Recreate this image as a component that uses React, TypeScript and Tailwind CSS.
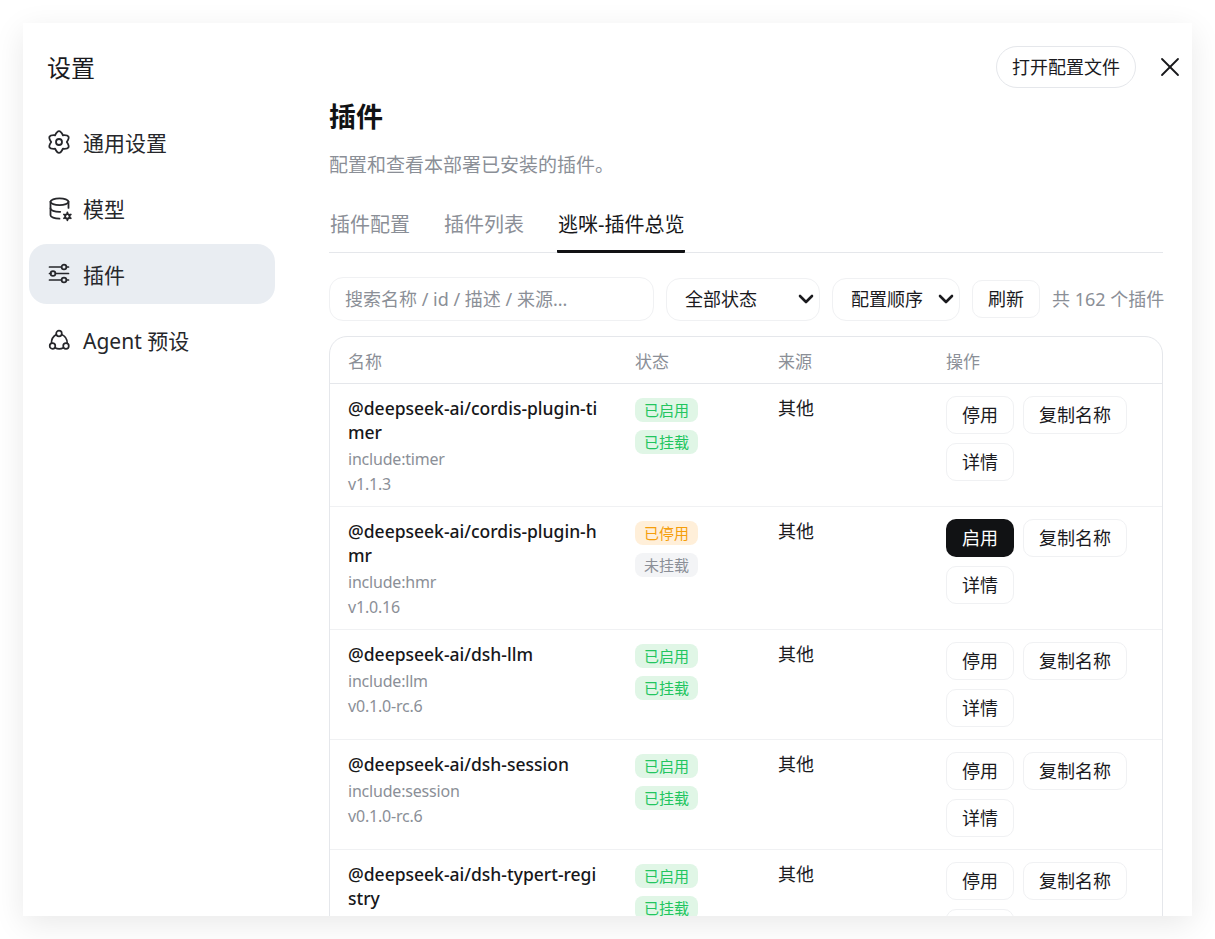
import { ChevronDown, X } from 'lucide-react';
import { TbDatabaseCog } from 'react-icons/tb';

const font = "font-['Noto_Sans','Noto_Sans_CJK_SC',sans-serif]";

// six rounded lobes with sharp notches between them
const gearPath =
    [0, 1, 2, 3, 4, 5]
        .map((i) => {
            const tip = ((i * 60 - 90) * Math.PI) / 180;
            const next = tip + Math.PI / 6;
            const ctrl = `${(12 + 15 * Math.cos(tip)).toFixed(2)} ${(12 + 15 * Math.sin(tip)).toFixed(2)}`;
            const notch = `${(12 + 7.8 * Math.cos(next)).toFixed(2)} ${(12 + 7.8 * Math.sin(next)).toFixed(2)}`;
            return `Q${ctrl} ${notch}`;
        })
        .join(' ') + ' Z';
const gearStart = `M${(12 + 7.8 * Math.cos((-120 * Math.PI) / 180)).toFixed(2)} ${(12 + 7.8 * Math.sin((-120 * Math.PI) / 180)).toFixed(2)} `;

function GearIcon() {
    return (
        <svg viewBox="0 0 24 24" fill="none" stroke="currentColor" strokeWidth={1.8} strokeLinejoin="round" className="size-6 shrink-0">
            <path d={gearStart + gearPath} />
            <circle cx="12" cy="12" r="3" />
        </svg>
    );
}

function DatabaseIcon() {
    return (
        <span className="flex size-6 shrink-0 items-center justify-center">
            <TbDatabaseCog className="size-[27px] shrink-0" strokeWidth={1.6} />
        </span>
    );
}

function SlidersIcon() {
    return (
        <svg viewBox="0 0 24 24" fill="none" stroke="currentColor" strokeWidth={1.7} strokeLinecap="round" className="size-6 shrink-0">
            <path d="M2.5 5h12M19.5 5h2M2.5 11.5h1.5M8.5 11.5h13M2.5 18h12M19.5 18h2" />
            <circle cx="17" cy="5" r="2.4" />
            <circle cx="6" cy="11.5" r="2.4" />
            <circle cx="17" cy="18" r="2.4" />
        </svg>
    );
}

function AgentIcon() {
    return (
        <svg viewBox="0 0 24 24" fill="none" stroke="currentColor" strokeWidth={1.7} strokeLinecap="round" className="size-6 shrink-0">
            <circle cx="12" cy="5.5" r="2.8" />
            <circle cx="5.5" cy="18" r="2.8" />
            <circle cx="19" cy="18" r="2.8" />
            <path d="M9.3 6.6A9.5 9.5 0 0 0 4.5 15.2M14.7 6.6A9.5 9.5 0 0 1 20.2 15.2M8 19.8A9 9 0 0 0 16.5 19.8" />
        </svg>
    );
}

const navItems = [
    { label: '通用设置', icon: GearIcon },
    { label: '模型', icon: DatabaseIcon },
    { label: '插件', icon: SlidersIcon, active: true },
    { label: 'Agent 预设', icon: AgentIcon },
];

const plugins = [
    { name: '@deepseek-ai/cordis-plugin-timer', id: 'include:timer', version: 'v1.1.3', enabled: true },
    { name: '@deepseek-ai/cordis-plugin-hmr', id: 'include:hmr', version: 'v1.0.16', enabled: false },
    { name: '@deepseek-ai/dsh-llm', id: 'include:llm', version: 'v0.1.0-rc.6', enabled: true },
    { name: '@deepseek-ai/dsh-session', id: 'include:session', version: 'v0.1.0-rc.6', enabled: true },
    { name: '@deepseek-ai/dsh-typert-registry', id: 'include:typert-registry', version: 'v0.1.0-rc.6', enabled: true },
];

const rowGrid = 'grid grid-cols-[287px_143px_168px_1fr]';
const outlineBtn = 'h-[38px] rounded-[10px] border border-[#f0f1f3] bg-white text-[18px] text-[#1a1a1e]';

function Badge({ label, tone }: { label: string; tone: 'green' | 'orange' | 'gray' }) {
    const toneClass =
        tone === 'green'
            ? 'bg-[#e0f6e6] text-[#22c55e]'
            : tone === 'orange'
              ? 'bg-[#ffefd9] text-[#f59e0b]'
              : 'bg-[#f3f4f6] text-[#8b8f97]';
    return <span className={`flex h-6 w-[63px] items-center justify-center rounded-lg text-[15px] ${toneClass}`}>{label}</span>;
}

function PluginRow({ plugin }: { plugin: (typeof plugins)[number] }) {
    return (
        <div className={`${rowGrid} border-b border-[#f0f1f3] py-3`}>
            <div className="pr-[17px] pl-[18px]">
                <div className="text-[17.5px] leading-6 font-medium break-all text-[#17171a]">{plugin.name}</div>
                <div className="mt-[3px] -mb-[3px] text-[16px] leading-[25px] tracking-[-0.2px] text-[#8b8f97]">
                    <div>{plugin.id}</div>
                    <div>{plugin.version}</div>
                </div>
            </div>
            <div className="flex flex-col items-start gap-2 pt-0.5 pl-[18px]">
                <Badge label={plugin.enabled ? '已启用' : '已停用'} tone={plugin.enabled ? 'green' : 'orange'} />
                <Badge label={plugin.enabled ? '已挂载' : '未挂载'} tone={plugin.enabled ? 'green' : 'gray'} />
            </div>
            <div className="pl-[18px] text-[18px] leading-6 text-[#1a1a1e]">其他</div>
            <div className="flex flex-wrap content-start gap-[9px] pl-[18px]">
                {plugin.enabled ? (
                    <button className={`${outlineBtn} w-[68px]`}>停用</button>
                ) : (
                    <button className="h-[38px] w-[68px] rounded-[10px] bg-[#111214] text-[18px] text-white">启用</button>
                )}
                <button className={`${outlineBtn} w-[104px]`}>复制名称</button>
                <button className={`${outlineBtn} w-[68px]`}>详情</button>
            </div>
        </div>
    );
}

export default function App() {
    return (
        <div className={`h-[939px] w-full overflow-hidden bg-white p-[23px] ${font}`}>
            <div className="flex h-[893px] w-[1169px] overflow-hidden bg-white shadow-[0_8px_30px_rgba(0,0,0,0.09)]">
                <aside className="w-[276px] shrink-0 pl-1.5">
                    <div className="pt-[26px] pl-[18px] text-[24px] leading-[38px] text-[#1a1a1e]">设置</div>
                    <nav className="mt-[25px] flex w-[246px] flex-col gap-1.5">
                        {navItems.map(({ label, icon: Icon, active }) => (
                            <div
                                key={label}
                                className={`flex h-[60px] items-center gap-3 rounded-[18px] pl-[18px] text-[21px] text-[#26272b] ${active ? 'bg-[#e9edf2]' : ''}`}
                            >
                                <Icon />
                                <span className="pt-1">{label}</span>
                            </div>
                        ))}
                    </nav>
                </aside>

                <main className="flex min-w-0 flex-1 flex-col">
                    <div className="flex h-[65px] shrink-0 items-end justify-end gap-[18px] pr-1.5">
                        <button className="h-[42px] w-[140px] rounded-full border border-[#e5e7eb] bg-white text-[18px] text-[#1a1a1e]">
                            打开配置文件
                        </button>
                        <X className="mb-[5px] size-8 text-[#17171a]" strokeWidth={1.35} />
                    </div>

                    <div className="ml-[30px] w-[834px]">
                        <h1 className="mt-[7px] text-[27px] leading-[44px] font-bold text-[#111214]">插件</h1>
                        <p className="mt-3 text-[19px] leading-7 text-[#8b8f97]">配置和查看本部署已安装的插件。</p>

                        <div className="mt-[23px] flex gap-[34px] border-b border-[#e5e7eb] pl-px text-[20px] text-[#8b8f97]">
                            <div className="h-[50px] pt-[9px] leading-7">插件配置</div>
                            <div className="h-[50px] pt-[9px] leading-7">插件列表</div>
                            <div className="-mx-px -mb-px h-[51px] rounded-[1px] border-b-[3px] border-[#111214] px-px pt-[9px] leading-7 text-[#17171a]">
                                逃咪-插件总览
                            </div>
                        </div>

                        <div className="mt-6 flex items-center gap-3">
                            <input
                                placeholder="搜索名称 / id / 描述 / 来源..."
                                className="h-11 w-[325px] shrink-0 rounded-[14px] border border-[#f0f1f3] px-[15px] text-[18px] outline-none placeholder:text-[#8b8f97]"
                            />
                            <button className="flex h-[43px] w-[154px] shrink-0 items-center justify-between rounded-[14px] border border-[#f0f1f3] pr-px pl-[18px] text-[18px] text-[#1a1a1e]">
                                全部状态
                                <ChevronDown className="size-6" strokeWidth={2.6} />
                            </button>
                            <button className="flex h-[43px] w-[128px] shrink-0 items-center justify-between rounded-[14px] border border-[#f0f1f3] pr-px pl-[18px] text-[18px] text-[#1a1a1e]">
                                配置顺序
                                <ChevronDown className="size-6" strokeWidth={2.6} />
                            </button>
                            <button className={`${outlineBtn} w-[68px] shrink-0`}>刷新</button>
                            <span className="text-[18px] whitespace-nowrap text-[#8b8f97]">共 162 个插件</span>
                        </div>

                        <div className="mt-[15px] rounded-t-[18px] border border-[#e5e7eb]">
                            <div className={`${rowGrid} h-[47px] items-center border-b border-[#e5e7eb] pt-[3px] text-[17px] text-[#8b8f97]`}>
                                <div className="pl-[18px]">名称</div>
                                <div className="pl-[18px]">状态</div>
                                <div className="pl-[18px]">来源</div>
                                <div className="pl-[18px]">操作</div>
                            </div>
                            {plugins.map((plugin) => (
                                <PluginRow key={plugin.name} plugin={plugin} />
                            ))}
                        </div>
                    </div>
                </main>
            </div>
        </div>
    );
}
